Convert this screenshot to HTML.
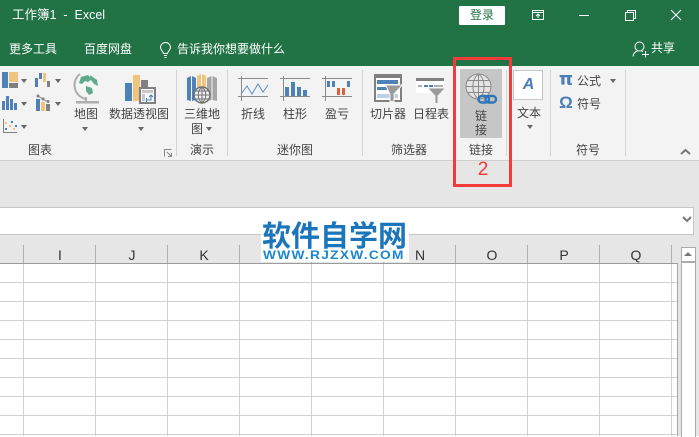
<!DOCTYPE html>
<html lang="zh"><head><meta charset="utf-8"><style>
html,body{margin:0;padding:0}
body{width:699px;height:436px;overflow:hidden;position:relative;background:#fff;font-family:"Liberation Sans","Noto Sans CJK SC",sans-serif}
div,span{position:absolute}
.t{font-size:12px;line-height:16px;color:#444;white-space:nowrap}
.w{color:#fff}
.s{background:#d4d4d4;width:1px;top:70px;height:86px}
.v{background:#d0d0d0;width:1px;top:264px;height:172px}
.h{background:#d0d0d0;height:1px;left:0;width:677px}
.hs{background:#b0b0b0;width:1px;top:245px;height:18px}
.c{font-size:14px;line-height:18px;color:#333;top:246px;width:30px;text-align:center}
.car{width:0;height:0;border-left:3px solid transparent;border-right:3px solid transparent;border-top:4px solid #666}
svg{position:absolute;overflow:visible}
</style></head><body>
<div style="left:0;top:0;width:699px;height:66px;background:#217346"></div>
<div class="t w" style="left:12px;top:7px;font-size:12.5px">工作簿1&nbsp; -&nbsp; Excel</div>
<div style="left:459px;top:6px;width:46px;height:19px;background:#fff;border-radius:1px;color:#217346;font-size:12px;line-height:19px;text-align:center">登录</div>
<svg style="left:530px;top:8px" width="150" height="16" fill="none" stroke="#fff" stroke-width="1"><path d="M2.500 2.500H13.500V11.500H2.500ZM2.500 4.500H13.500M8 10V6M6 8L8 6L10 8"/><path d="M49 7.500H59"/><path d="M95.500 4.500H103.500V12.500H95.500ZM97.500 4.500V2.500H105.500V10.500H103.500"/><path d="M141 2L151 12M151 2L141 12"/></svg>
<div class="t w" style="left:9px;top:41px">更多工具</div>
<div class="t w" style="left:84px;top:41px">百度网盘</div>
<svg style="left:159px;top:42px" width="14" height="17" fill="none" stroke="#fff" stroke-width="1"><path d="M4.500 11.500C4 9 1.500 8 1.500 5.500A5 5 0 0 1 11.500 5.500C11.500 8 9 9 8.500 11.500ZM5 13.500H8M5.500 15.500H7.500"/></svg>
<div class="t w" style="left:177px;top:41px">告诉我你想要做什么</div>
<svg style="left:632px;top:41px" width="18" height="18" fill="none" stroke="#fff" stroke-width="1"><circle cx="7.500" cy="5.500" r="4.500"/><path d="M1 15.500C1.500 12 3.500 10.500 5.500 10M9.500 10L11 10.700M13.500 10V16.500M10 13.500H17"/></svg>
<div class="t w" style="left:651px;top:40px">共享</div>

<div style="left:0;top:66px;width:699px;height:94px;background:#f3f3f3"></div>
<div style="left:0;top:160px;width:699px;height:1px;background:#cfcfcf"></div>
<div style="left:0;top:161px;width:699px;height:275px;background:#e6e6e6"></div>
<div class="s" style="left:176px"></div><div class="s" style="left:227px"></div><div class="s" style="left:362px"></div><div class="s" style="left:506px"></div><div class="s" style="left:550px"></div><div class="s" style="left:625px"></div>

<div style="left:460px;top:69px;width:42px;height:69px;background:#c6c6c6"></div>

<!-- icons in page coordinates -->
<svg style="left:0;top:0" width="699" height="160">
<!-- treemap -->
<path fill="#4e81b8" d="M2 72H8V88H2Z"/><path fill="#efc57d" d="M9 72H18V82H9Z"/><path fill="#808080" d="M9 83H18V88H9Z"/>
<!-- waterfall -->
<path fill="#4e81b8" d="M35 78H38V87H35ZM39 73H42V79H39Z"/><path fill="#efc57d" d="M43 73H46V82H43Z"/><path fill="#808080" d="M47 81H50V87H47Z"/>
<!-- column -->
<path fill="#4e81b8" d="M2 101H5V110H2ZM6 96H9V110H6ZM10 99H13V110H10ZM14 103H17V110H14Z"/>
<!-- combo -->
<path fill="#4e81b8" d="M36 99H40V111H36Z"/><path fill="#efc57d" d="M41 102H45V111H41Z"/><path fill="#808080" d="M46 104H50V111H46Z"/>
<path stroke="#808080" fill="#808080" d="M38 96L48 102"/><circle cx="38" cy="96" r="1.500" fill="#808080"/><circle cx="43" cy="99" r="1.500" fill="#808080"/><circle cx="48" cy="101.500" r="1.500" fill="#808080"/>
<!-- scatter -->
<path fill="none" stroke="#808080" d="M3.500 119V132.500H17"/>
<path fill="#efc57d" d="M5 122h2v2H5zM9 125h2v2H9zM13 128h2v2h-2z"/><path fill="#4e81b8" d="M11 121h2v2h-2zM15 125h2v2h-2zM5 128h2v2H5z"/>
<!-- globe -->
<path fill="none" stroke="#aeaeae" stroke-width="2" d="M80 74C72 80 72 94 85 99"/><path stroke="#aeaeae" stroke-width="2" d="M86 97V101"/><path fill="#aeaeae" d="M76 101H99V103.500H76Z"/>
<circle cx="88" cy="85" r="10.500" fill="#f2f6f4"/>
<path fill="#5fa98d" d="M81 77L88 75L92 79L88 82L85 81L82 84L79 83ZM90 75L97 80L98 86L94 84L91 80ZM86 86L92 88L93 93L89 95L86 91Z"/>
<!-- pivot -->
<path fill="#4e81b8" d="M125 83H132V101H125Z"/><path fill="#efc57d" d="M133 75H140V101H133Z"/><path fill="#808080" d="M141 80H148V87H141Z"/>
<path fill="#f7f7f7" stroke="#808080" stroke-width="2" d="M140 88H155V103H140Z"/><path fill="#c8c8c8" d="M142 90H153V93H142ZM142 94H145V101H142Z"/><path fill="none" stroke="#3f7fc0" d="M146.500 100H151V95M149 97L151 95L153 97M146.500 98L146.500 102"/>
<!-- 3d map -->
<path fill="#4e81b8" d="M187 78L191 76V101L187 100ZM192 76L196 78V100L192 101Z"/><path fill="#efc57d" d="M197 76L201 74V88H197ZM202 74L206 76V88H202Z"/><path fill="#a6a6a6" d="M207 78L211.500 76V100L207 101ZM212.500 76L217 78V101L212.500 100Z"/>
<circle cx="202" cy="95" r="8" fill="#f3f3f3" stroke="#707070" stroke-width="1.500"/><path fill="none" stroke="#707070" d="M194 95H210M195.500 91H208.500M195.500 99H208.500M202 87V103M202 87C197 91 197 99 202 103M202 87C207 91 207 99 202 103"/>
<!-- sparklines -->
<g fill="none"><path stroke="#8a8a8a" d="M238 78.500H268M238 96.500H268M241.500 76V101M280 78.500H310M280 96.500H310M283.500 76V101M322 78.500H352M322 96.500H352M325.500 76V101"/>
<path stroke="#5b8fc4" d="M241 94L247 86L252 94L258 84L263 92L268 85"/></g>
<path fill="#4e81b8" d="M285 87H289V96H285ZM291 82H295V96H291ZM297 87H301V96H297ZM303 90H307V96H303Z"/>
<path fill="#4e81b8" d="M327 81H330V87H327ZM332 81H335V87H332ZM347 81H350V87H347Z"/><path fill="#d9603b" d="M337 88H340V95H337ZM342 88H345V95H342Z"/>
<!-- slicer -->
<path fill="#fff" stroke="#808080" stroke-width="2" d="M375 75H401V101H375Z"/><path fill="#808080" d="M374 74H402V78H374Z"/>
<path fill="#4e81b8" d="M377 80H398V84H377ZM377 87H387V90H377Z"/><path fill="#bcd0e6" d="M377 94H398V98H377Z"/>
<path fill="#9a9a9a" stroke="#f3f3f3" d="M385.500 85H402.500L394 94V101.500H390V94Z"/>
<!-- timeline -->
<path fill="#fff" d="M416 78H444V93H416Z"/><path fill="#808080" d="M416 78H444V81H416Z"/>
<path fill="#b0b0b0" d="M418 85H422V87H418ZM434 85H443V87H434Z"/><path fill="#4e81b8" d="M424 85H428V87H424ZM429 85H433V87H429Z"/>
<path fill="#9a9a9a" stroke="#f3f3f3" d="M427.500 88H445.500L438 96V103.500H435V96Z"/>
<!-- link globe -->
<g fill="none"><circle cx="478.500" cy="86.500" r="12.500" fill="#e4e4e4" stroke="#8a8a8a"/><path stroke="#8a8a8a" d="M466 86.500H491M468 80.500H489M468 92.500H489M478.500 74V99M478.500 74C471 79 471 94 478.500 99M478.500 74C486 79 486 94 478.500 99"/>
<rect x="478.500" y="96" width="10.500" height="6.500" rx="3.250" stroke="#2f76b8" stroke-width="2.500"/><rect x="485.500" y="96" width="10.500" height="6.500" rx="3.250" stroke="#2f76b8" stroke-width="2.500"/></g>
</svg>

<div class="t" style="left:74px;top:106px">地图</div>
<div class="t" style="left:109px;top:106px">数据透视图</div>
<div class="car" style="left:21px;top:79px"></div><div class="car" style="left:55px;top:79px"></div><div class="car" style="left:21px;top:102px"></div><div class="car" style="left:55px;top:102px"></div><div class="car" style="left:21px;top:125px"></div>
<div class="car" style="left:82px;top:127px"></div><div class="car" style="left:138px;top:127px"></div>
<div class="t" style="left:28px;top:142px">图表</div>
<svg style="left:164px;top:149px" width="9" height="9" fill="none" stroke="#888"><path d="M0.500 7.500V0.500H7.500"/><path d="M3 3L7.500 7.500M4 7.500H7.500V4"/></svg>

<div class="t" style="left:184px;top:106px">三维地</div><div class="t" style="left:191px;top:121px">图</div>
<div class="car" style="left:206px;top:127px"></div>
<div class="t" style="left:190px;top:142px">演示</div>

<div class="t" style="left:241px;top:106px">折线</div><div class="t" style="left:283px;top:106px">柱形</div><div class="t" style="left:325px;top:106px">盈亏</div>
<div class="t" style="left:277px;top:142px">迷你图</div>

<div class="t" style="left:370px;top:106px">切片器</div><div class="t" style="left:413px;top:106px">日程表</div>
<div class="t" style="left:391px;top:142px">筛选器</div>

<div class="t" style="left:475px;top:108px">链</div><div class="t" style="left:475px;top:122px">接</div>
<div class="t" style="left:469px;top:142px">链接</div>

<div style="left:513px;top:70px;width:28px;height:28px;background:#fff;border:1px solid #c6c6c6"></div>
<div style="left:514px;top:75px;width:29px;text-align:center;color:#4a7fb5;font:italic bold 16px/20px 'Liberation Sans',sans-serif">A</div>
<div class="t" style="left:517px;top:105px">文本</div>
<div class="car" style="left:527px;top:125px"></div>
<div style="left:558px;top:70px;width:16px;color:#4a7fb5;font:bold 18px/20px 'DejaVu Sans',sans-serif;text-align:center">π</div>
<div style="left:558px;top:93px;width:16px;color:#4a7fb5;font:bold 17px/20px 'Liberation Sans',sans-serif;text-align:center">Ω</div>
<div class="t" style="left:577px;top:73px">公式</div><div class="car" style="left:610px;top:79px"></div>
<div class="t" style="left:577px;top:96px">符号</div>
<div class="t" style="left:576px;top:142px">符号</div>
<svg style="left:680px;top:148px" width="12" height="8" fill="none" stroke="#777" stroke-width="2"><path d="M1 6L5.500 2L10 6"/></svg>

<!-- red annotation -->
<div style="left:453px;top:57px;width:53px;height:124px;border:3px solid #f33b3b"></div>
<div style="left:473px;top:159px;width:20px;text-align:center;color:#f33b3b;font-size:19px;line-height:22px">2</div>

<!-- formula bar -->
<div style="left:-2px;top:207px;width:694px;height:26px;background:#fff;border:1px solid #c6c6c6"></div>
<svg style="left:682px;top:216px" width="10" height="7" fill="none" stroke="#777" stroke-width="2"><path d="M1 1L5 5L9 1"/></svg>

<!-- grid -->
<div style="left:0;top:264px;width:677px;height:172px;background:#fff"></div>
<div style="left:0;top:263px;width:678px;height:1px;background:#9a9a9a"></div>
<div style="left:677px;top:263px;width:1px;height:173px;background:#a6a6a6"></div>
<div class="h" style="top:282px"></div><div class="h" style="top:301px"></div><div class="h" style="top:320px"></div><div class="h" style="top:339px"></div><div class="h" style="top:358px"></div><div class="h" style="top:377px"></div><div class="h" style="top:396px"></div><div class="h" style="top:415px"></div><div class="h" style="top:434px"></div>
<div class="v" style="left:23px"></div><div class="v" style="left:95px"></div><div class="v" style="left:167px"></div><div class="v" style="left:239px"></div><div class="v" style="left:311px"></div><div class="v" style="left:383px"></div><div class="v" style="left:455px"></div><div class="v" style="left:527px"></div><div class="v" style="left:599px"></div><div class="v" style="left:671px"></div>
<div class="hs" style="left:23px"></div><div class="hs" style="left:95px"></div><div class="hs" style="left:167px"></div><div class="hs" style="left:239px"></div><div class="hs" style="left:311px"></div><div class="hs" style="left:383px"></div><div class="hs" style="left:455px"></div><div class="hs" style="left:527px"></div><div class="hs" style="left:599px"></div><div class="hs" style="left:671px"></div>
<div class="c" style="left:45px">I</div><div class="c" style="left:117px">J</div><div class="c" style="left:189px">K</div><div class="c" style="left:405px">N</div><div class="c" style="left:477px">O</div><div class="c" style="left:549px">P</div><div class="c" style="left:621px">Q</div>

<!-- scrollbar -->
<div style="left:681px;top:247px;width:13px;height:189px;background:#fff;border-left:1px solid #ababab;border-right:1px solid #ababab;border-top:1px solid #ababab"></div>
<div style="left:682px;top:261px;width:13px;height:2px;background:#ababab"></div>
<div style="left:684px;top:252px;width:0;height:0;border-left:4px solid transparent;border-right:4px solid transparent;border-bottom:4px solid #777"></div>

<!-- watermark -->
<div style="left:261px;top:221px;width:148px;height:41px;background:#fff"></div>
<div style="left:262px;top:220px;width:146px;font-size:29px;line-height:34px;font-weight:bold;color:#1a75bb;white-space:nowrap">软件自学网</div>
<div style="left:263px;top:250px;font-size:11.500px;line-height:13px;font-weight:bold;color:#1a86d0;letter-spacing:1.100px;white-space:nowrap;transform:scaleX(1.19);transform-origin:0 0">WWW.RJZXW.COM</div>
</body></html>
